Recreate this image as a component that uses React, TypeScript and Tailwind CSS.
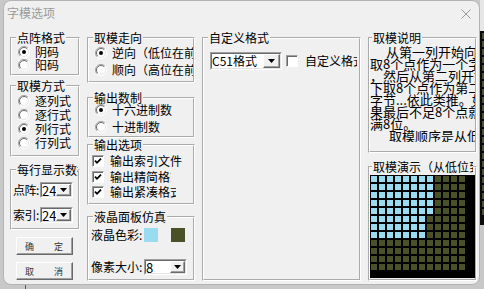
import React from 'react';

const BLUE = '#99dbef';
const OLIVE = '#4a5028';

function Radio({ on }: { on?: boolean }) {
  return (
    <svg width="12" height="12" viewBox="0 0 12 12" className="shrink-0">
      <circle cx="6" cy="6" r="5.5" fill="#fff" />
      <path d="M2.1 9.9A5.5 5.5 0 0 1 9.9 2.1" fill="none" stroke="#a0a0a0" />
      <path d="M9.9 2.1A5.5 5.5 0 0 1 2.1 9.9" fill="none" stroke="#fff" />
      <path d="M2.8 9.2A4.5 4.5 0 0 1 9.2 2.8" fill="none" stroke="#696969" />
      <path d="M9.2 2.8A4.5 4.5 0 0 1 2.8 9.2" fill="none" stroke="#e3e3e3" />
      {on && <circle cx="6" cy="6" r="2" fill="#000" />}
    </svg>
  );
}

function Check({ on }: { on?: boolean }) {
  return (
    <span className="flex h-[12px] w-[12px] shrink-0 items-center justify-center border border-t-[#a0a0a0] border-l-[#a0a0a0] border-r-white border-b-white bg-white shadow-[inset_1px_1px_0_#696969]">
      {on && (
        <svg width="8" height="8" viewBox="0 0 8 8">
          <path d="M1 3.6 3 5.8 7 1.6" fill="none" stroke="#000" strokeWidth="1.8" />
        </svg>
      )}
    </span>
  );
}

function Combo({ value, className, btn, text = 'text-[12px]' }: { value: string; className: string; btn: string; text?: string }) {
  return (
    <div className={`flex shrink-0 border border-t-[#a0a0a0] border-l-[#a0a0a0] border-r-white border-b-white ${className}`}>
      <div className="flex flex-1 border border-t-[#696969] border-l-[#696969] border-r-[#e3e3e3] border-b-[#e3e3e3] bg-white">
        <span className={`flex-1 self-center overflow-hidden whitespace-nowrap leading-none ${text}`}>{value}</span>
        <span className={`flex items-center justify-center border border-t-white border-l-white border-r-[#696969] border-b-[#696969] bg-[#f0f0f0] shadow-[inset_-1px_-1px_0_#a0a0a0] ${btn}`}>
          <svg width="7" height="4" viewBox="0 0 7 4">
            <path d="M0 0h7L3.5 4z" fill="#000" />
          </svg>
        </span>
      </div>
    </div>
  );
}

function Group({ title, className, legend = 'ml-[4px]', children }: { title: string; className: string; legend?: string; children?: React.ReactNode }) {
  return (
    <fieldset className={`min-w-0 overflow-hidden border-2 border-white [border-style:groove] ${className}`}>
      <legend className={`overflow-hidden whitespace-nowrap px-[1px] text-[12px] leading-[12px] ${legend}`}>{title}</legend>
      {children}
    </fieldset>
  );
}

function RadioRow({ label, on, className }: { label: string; on?: boolean; className: string }) {
  return (
    <div className={`flex items-center gap-[5px] overflow-hidden whitespace-nowrap pl-[6px] text-[12px] leading-none ${className}`}>
      <Radio on={on} />
      <span>{label}</span>
    </div>
  );
}

function CheckRow({ label, className, labelW = '' }: { label: string; className: string; labelW?: string }) {
  return (
    <div className={`flex items-center gap-[6px] whitespace-nowrap pl-[3px] text-[12px] leading-none ${className}`}>
      <Check on />
      <span className={`overflow-hidden ${labelW}`}>{label}</span>
    </div>
  );
}

function OldButton({ a, b, className }: { a: string; b: string; className: string }) {
  return (
    <button className={`ml-[6px] flex h-[18px] w-[57px] items-center justify-between border border-t-white border-l-white border-r-[#696969] border-b-[#696969] bg-[#f0f0f0] pl-[8px] pr-[9px] text-[9px] leading-none text-[#333] shadow-[inset_-1px_-1px_0_#a0a0a0] ${className}`}>
      <span>{a}</span>
      <span>{b}</span>
    </button>
  );
}

const notes = [
  { t: '从第一列开始向下', pad: 'pl-[16px]' },
  { t: '取8个点作为一个字节', pad: '' },
  { t: '，然后从第二列开始向', pad: '' },
  { t: '下取8个点作为第二个', pad: '' },
  { t: '字节...依此类推。如', pad: '' },
  { t: '果最后不足8个点就补', pad: '' },
  { t: '满8位。', pad: '' },
  { t: '取模顺序是从低到高', pad: 'pl-[19px]' },
];

const cells = Array.from({ length: 144 }, (_, i) => {
  const r = Math.floor(i / 12);
  const c = i % 12;
  return (r < 5 && c < 8) || (r >= 5 && r < 8 && c < 7);
});

export default function App() {
  return (
    <div className="relative h-[289px] w-[484px] overflow-hidden bg-[#c8c8c8] font-['Noto_Sans_CJK_SC','Noto_Sans',sans-serif] text-black">
      {/* window behind, peeking out on the right */}
      <div className="absolute right-0 top-0 h-[31px] w-[4px] bg-[#e6e6e6]" />
      <div className="absolute right-0 top-[31px] flex h-[194px] w-[4px] flex-col gap-[2px] bg-[#0b0b0b] pt-[2px]">
        {Array.from({ length: 23 }, (_, i) => (
          <span key={i} className="ml-[2px] h-[6px] w-[2px] bg-[#4a5028]" />
        ))}
      </div>
      <div className="absolute left-[25px] top-[284px] h-[5px] w-[1px] bg-[#5a5a5a]" />

      <div className="absolute left-[3px] top-0 flex h-[285px] w-[477px] flex-col overflow-hidden rounded-lg border border-[#b4b4b4] bg-[#f0f0f0]">
        {/* title bar */}
        <div className="flex h-[31px] shrink-0 items-start">
          <span className="ml-[3px] mt-[6px] text-[12px] leading-[12px] text-[#9a9a9a]">字模选项</span>
          <svg width="10" height="10" viewBox="0 0 10 10" className="ml-auto mr-[8px] mt-[8px]">
            <path d="M0.5 0.5l9 9M9.5 0.5l-9 9" stroke="#9a9a9a" strokeWidth="1" />
          </svg>
        </div>

        <div className="flex gap-[7px] pl-[6px]">
          {/* column 1 */}
          <div className="flex w-[70px] shrink-0 flex-col">
            <Group title="点阵格式" className="h-[44px]">
              <div className="pt-[1px]">
                <RadioRow on label="阴码" className="h-[13px]" />
                <RadioRow label="阳码" className="h-[13px]" />
              </div>
            </Group>
            <Group title="取模方式" className="mt-[4px] h-[77px]">
              <div className="pt-[2px]">
                <RadioRow label="逐列式" className="h-[14px]" />
                <RadioRow label="逐行式" className="h-[14px]" />
                <RadioRow on label="列行式" className="h-[14px]" />
                <RadioRow label="行列式" className="h-[14px]" />
              </div>
            </Group>
            <Group title="每行显示数据" className="mt-[7px] h-[66px]" legend="ml-[4px] w-[62px]">
              <div className="mt-[6px] flex h-[16px] items-center pl-[1px]">
                <span className="w-[27px] shrink-0 whitespace-nowrap text-[12px] leading-none tracking-[-0.5px]">点阵:</span>
                <Combo value="24" className="h-[16px] w-[33px]" btn="w-[15px]" text="text-[13px]" />
              </div>
              <div className="mt-[9px] flex h-[16px] items-center pl-[1px]">
                <span className="w-[27px] shrink-0 whitespace-nowrap text-[12px] leading-none tracking-[-0.5px]">索引:</span>
                <Combo value="24" className="h-[16px] w-[33px]" btn="w-[15px]" text="text-[13px]" />
              </div>
            </Group>
            <OldButton a="确" b="定" className="mt-[7px]" />
            <OldButton a="取" b="消" className="mt-[7px]" />
          </div>

          {/* column 2 */}
          <div className="flex w-[108px] shrink-0 flex-col">
            <Group title="取模走向" className="h-[51px]">
              <div className="pt-[2px]">
                <RadioRow on label="逆向（低位在前）" className="h-[14px]" />
                <RadioRow label="顺向（高位在前）" className="mt-[3px] h-[14px]" />
              </div>
            </Group>
            <Group title="输出数制" className="mt-[9px] h-[46px]">
              <RadioRow on label="十六进制数" className="h-[12px]" />
              <RadioRow label="十进制数" className="mt-[5px] h-[12px]" />
            </Group>
            <Group title="输出选项" className="mt-[1px] h-[66px]">
              <div className="pt-[4px]">
                <CheckRow label="输出索引文件" className="h-[12px]" />
                <CheckRow label="输出精简格式" className="mt-[4px] h-[12px]" labelW="w-[61px]" />
                <CheckRow label="输出紧凑格式" className="mt-[3px] h-[12px]" labelW="w-[66px]" />
              </div>
            </Group>
            <Group title="液晶面板仿真" className="mt-[6px] h-[70px]">
              <div className="mt-[5px] flex h-[14px] items-center pl-[2px]">
                <span className="w-[53px] shrink-0 whitespace-nowrap text-[12px] leading-none">液晶色彩:</span>
                <span className="h-[14px] w-[14px]" style={{ background: BLUE }} />
                <span className="ml-[13px] h-[14px] w-[14px]" style={{ background: OLIVE }} />
              </div>
              <div className="mt-[17px] flex h-[16px] items-center pl-[2px]">
                <span className="w-[53px] shrink-0 whitespace-nowrap text-[12px] leading-none">像素大小:</span>
                <Combo value="8" className="h-[16px] w-[43px]" btn="w-[15px]" text="text-[13px]" />
              </div>
            </Group>
          </div>

          {/* column 3 */}
          <div className="flex w-[159px] shrink-0 flex-col">
            <Group title="自定义格式" className="h-[249px]">
              <div className="mt-[8px] flex h-[18px] items-center">
                <Combo value="C51格式" className="ml-[6px] h-[18px] w-[72px]" btn="w-[17px]" />
                <span className="ml-[4px]">
                  <Check />
                </span>
                <span className="ml-[7px] w-[52px] overflow-hidden whitespace-nowrap text-[12px] leading-none">自定义格式</span>
              </div>
            </Group>
          </div>

          {/* column 4 */}
          <div className="flex w-[109px] shrink-0 flex-col">
            <Group title="取模说明" className="h-[121px]" legend="ml-[2px]">
              <div className="overflow-hidden pt-[2px] text-[13px] leading-[12px]">
                {notes.map((n, i) => (
                  <div key={i} className={`whitespace-nowrap ${n.pad}`}>{n.t}</div>
                ))}
              </div>
            </Group>
            <Group title="取模演示（从低位到高位）" className="mt-[8px] h-[120px]" legend="ml-[2px] w-[101px]">
              <div className="mt-[2px] h-[103px] w-[105px] bg-black pl-[1px] pt-[1px]">
                <div className="grid grid-cols-[repeat(12,6px)] gap-[2px]">
                  {cells.map((b, i) => (
                    <span key={i} className="h-[6px] w-[6px]" style={{ background: b ? BLUE : OLIVE }} />
                  ))}
                </div>
              </div>
            </Group>
          </div>
        </div>
      </div>
    </div>
  );
}
